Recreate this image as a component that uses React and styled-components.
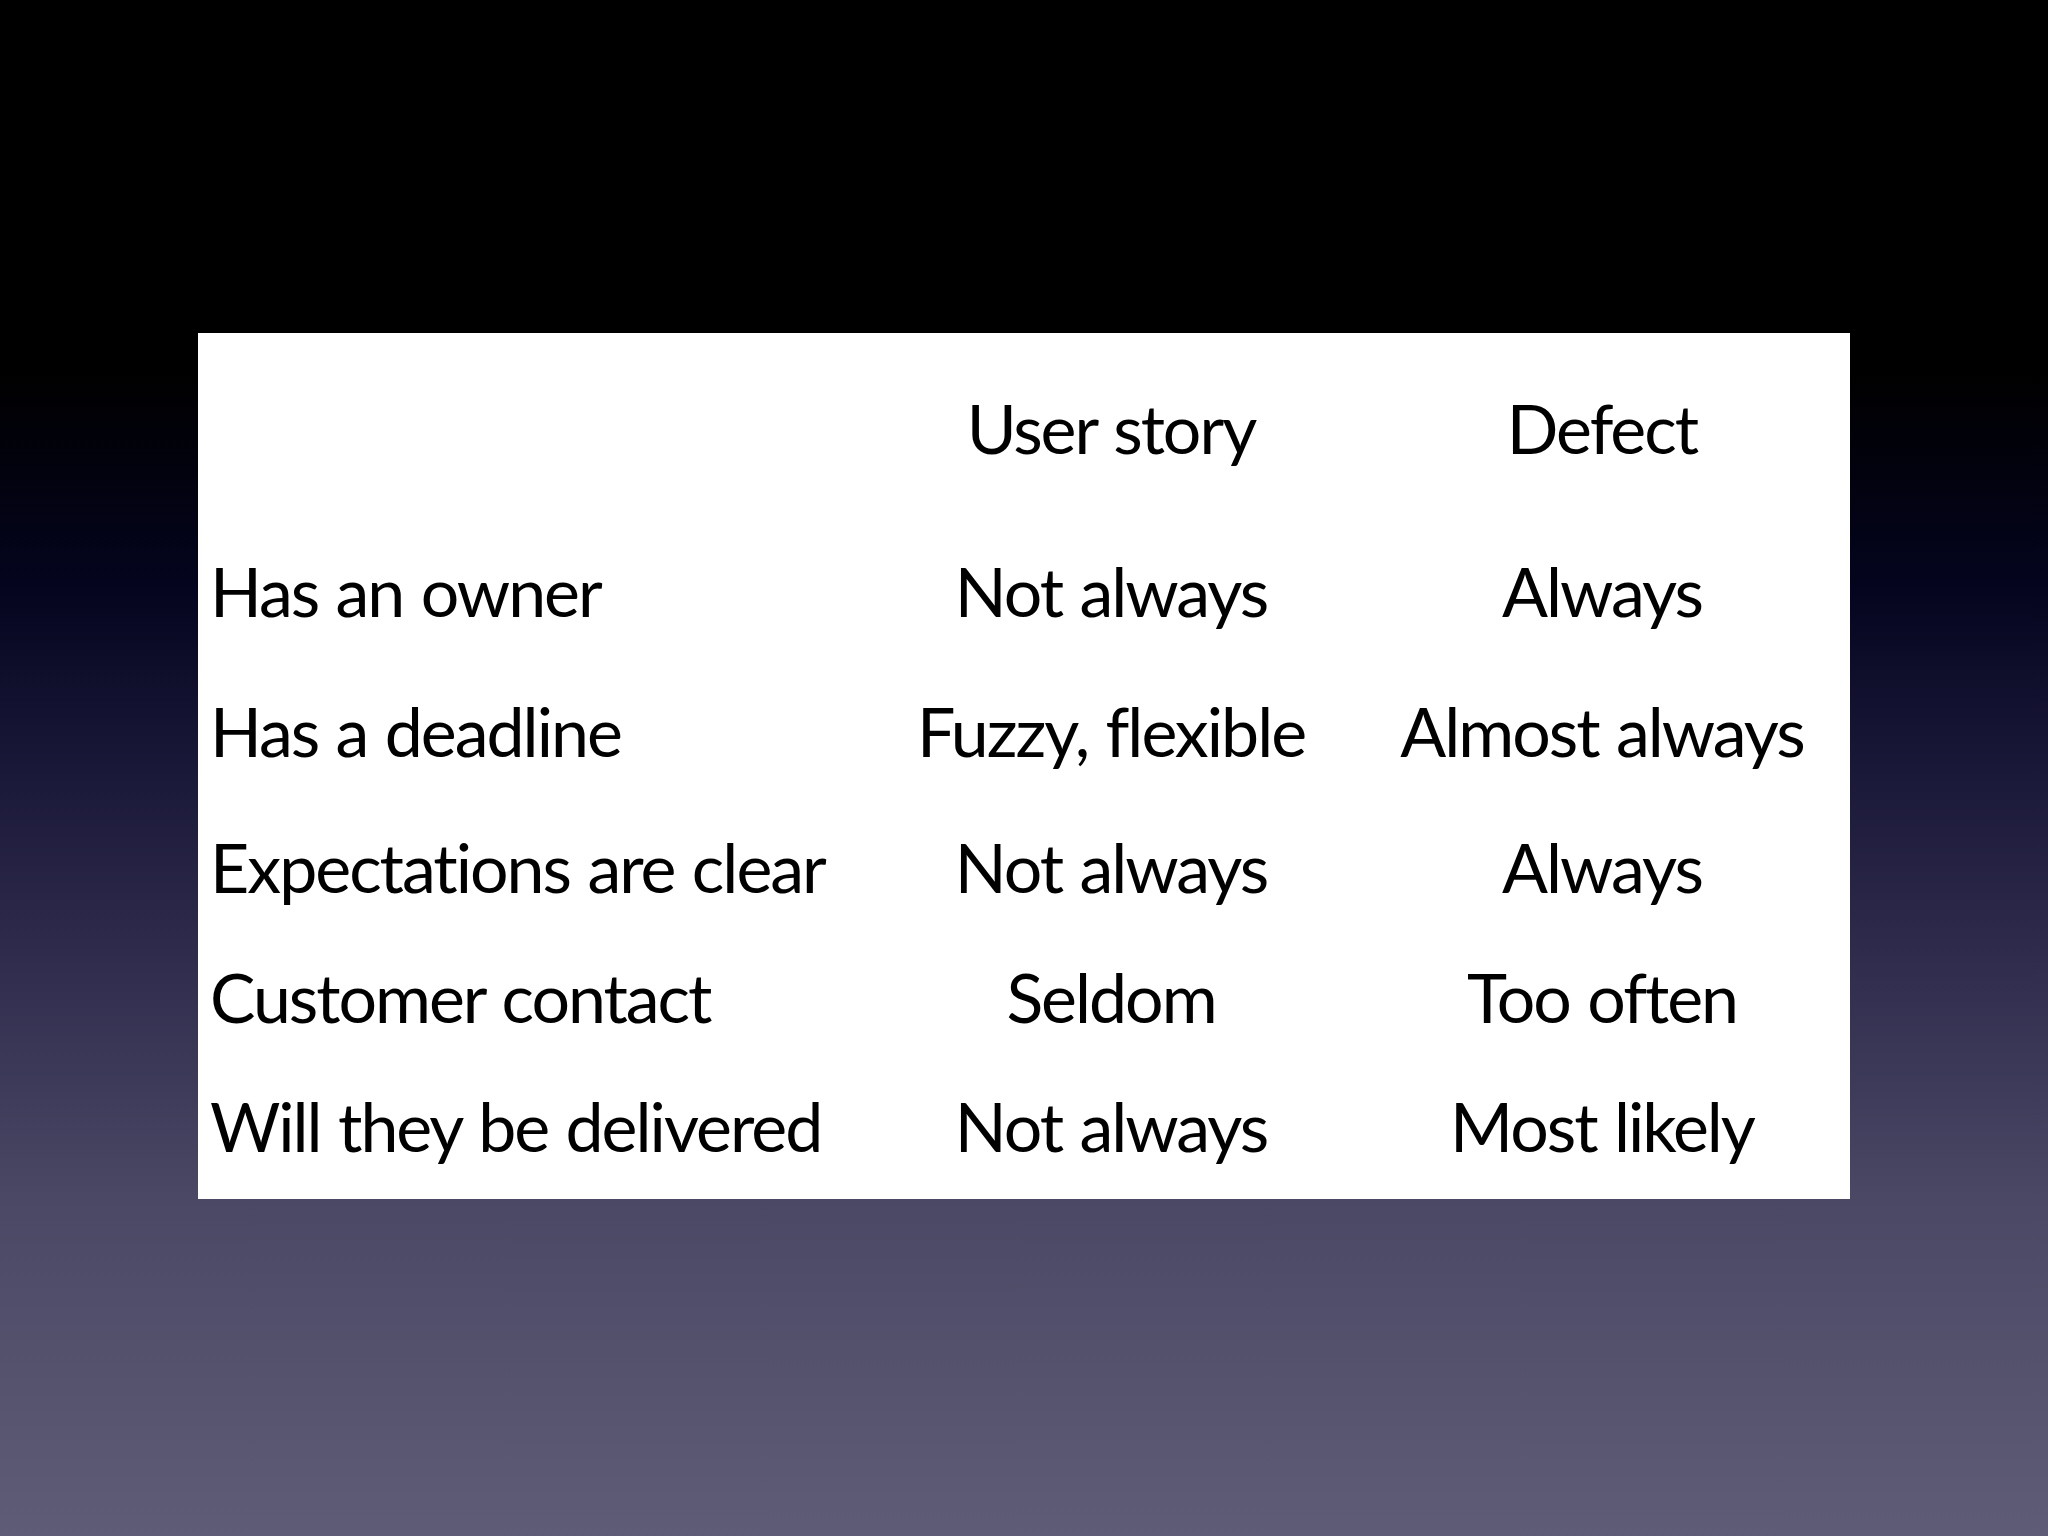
import React from 'react';
import styled, { createGlobalStyle } from 'styled-components';

const GlobalStyle = createGlobalStyle`
  html, body {
    margin: 0;
    padding: 0;
  }
  body {
    font-family: Lato, "Liberation Sans", sans-serif;
  }
`;

const Stage = styled.div`
  width: 2048px;
  height: 1536px;
  box-sizing: border-box;
  padding-top: 333px;
  background: linear-gradient(
    to bottom,
    #000 0%,
    #000 24%,
    #04041e 38%,
    #1a1838 50%,
    #2e2b4d 62%,
    #4a4864 78%,
    #5e5c76 100%
  );
`;

const Card = styled.div`
  width: 1652px;
  height: 866px;
  margin: 0 auto;
  box-sizing: border-box;
  padding-top: 55px;
  background: #fff;
  display: grid;
  grid-template-columns: 670px 486px 496px;
  grid-template-rows: 163px 140px 136px 130px 129px 80px;
  color: #000;
  font-size: 68px;
  line-height: 80px;
  letter-spacing: -2px;
  word-spacing: 2px;
  font-variant-ligatures: none;
`;

const Cell = styled.div`
  white-space: nowrap;
  text-align: ${(p) => (p.$label ? 'left' : 'center')};
  padding-left: ${(p) => (p.$label ? '12px' : '0')};
`;

const rows = [
  ['Has an owner', 'Not always', 'Always'],
  ['Has a deadline', 'Fuzzy, flexible', 'Almost always'],
  ['Expectations are clear', 'Not always', 'Always'],
  ['Customer contact', 'Seldom', 'Too often'],
  ['Will they be delivered', 'Not always', 'Most likely'],
];

export default function App() {
  return (
    <>
      <GlobalStyle />
      <Stage>
        <Card>
          <Cell $label />
          <Cell>User story</Cell>
          <Cell>Defect</Cell>
          {rows.map((r) => (
            <React.Fragment key={r[0]}>
              <Cell $label>{r[0]}</Cell>
              <Cell>{r[1]}</Cell>
              <Cell>{r[2]}</Cell>
            </React.Fragment>
          ))}
        </Card>
      </Stage>
    </>
  );
}
